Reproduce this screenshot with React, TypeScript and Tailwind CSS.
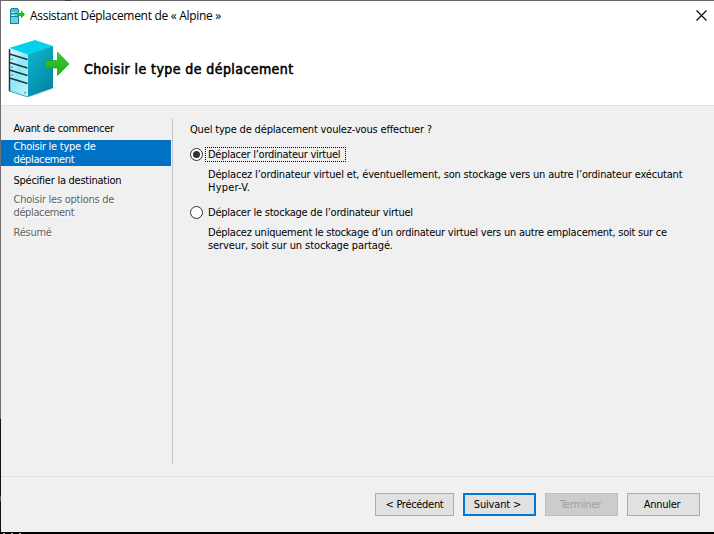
import React from "react";

const ui = "font-['DejaVu_Sans_Condensed','DejaVu_Sans',sans-serif] text-[11px] leading-[13px] whitespace-nowrap";

function ServerArrow() {
  return (
    <svg width="66" height="62" viewBox="0 0 66 62" className="block">
      <defs>
        <linearGradient id="front" x1="0" y1="0" x2="1" y2="1">
          <stop offset="0" stopColor="#eafcff" />
          <stop offset="0.5" stopColor="#8fe6f5" />
          <stop offset="1" stopColor="#c9f6fc" />
        </linearGradient>
        <linearGradient id="side" x1="0" y1="0" x2="0.6" y2="1">
          <stop offset="0" stopColor="#10b9d2" />
          <stop offset="1" stopColor="#0487a4" />
        </linearGradient>
        <linearGradient id="arrow" x1="0" y1="0" x2="0" y2="1">
          <stop offset="0" stopColor="#3cc935" />
          <stop offset="1" stopColor="#1fae1b" />
        </linearGradient>
      </defs>
      <path d="M20 59 L45 49 L50 49 L30 57Z" fill="#e8e8e8" />
      <path d="M1 10 L27 2 L45 8 L20 17Z" fill="#04d2ec" />
      <path d="M20 16.500 L45 8 V50 L20 59Z" fill="url(#side)" />
      <path d="M1 10 L20 16.500 V59 L1 53Z" fill="url(#front)" />
      <path d="M1.500 11 V53 M1.500 16 L19.500 21.500 M1.500 24.500 L19.500 30 M1.500 32 L19.500 37.500 M1.500 40 L19.500 45.500" fill="none" stroke="#123c48" strokeWidth="1.500" />
      <path d="M1 53 L20 59" stroke="#3ba7ba" strokeWidth="1" />
      <path d="M3.500 20.500h1.200v1.200h-1.200z M3.500 28.500h1.200v1.200h-1.200z M3.500 36.500h1.200v1.200h-1.200z M16.500 54h1.200v1.200h-1.200z" fill="#075b70" />
      <path d="M37.500 22.500 H49.500 V14 L61 26 L49.500 37.500 V30 H37.500Z" fill="url(#arrow)" stroke="#1ca41a" strokeWidth="0.700" />
    </svg>
  );
}

function ServerArrowSmall() {
  return (
    <svg width="16" height="16" viewBox="0 0 16 16" className="block" shapeRendering="crispEdges">
      <path d="M2 0h7v1h1v15H1V1h1z" fill="#168a98" />
      <path d="M2 1h7v3H2z" fill="#43bfce" />
      <path d="M2 4h7v11H2z" fill="#63d5e0" />
      <path d="M2 5h7v1H2z M2 8h7v1H2z" fill="#197f8d" />
      <path d="M3 4h2v1H3z M3 7h2v1H3z" fill="#fff" />
      <path d="M8 5h4V3h1v1h1v1h1v1h1v1h-1v1h-1v1h-1v1h-1V8H8z" fill="#22bb28" />
    </svg>
  );
}

function Radio({ checked = false }: { checked?: boolean }) {
  return (
    <span className="flex size-[13px] shrink-0 items-center justify-center rounded-full border border-[#333] bg-white">
      {checked && <span className="size-[7px] rounded-full bg-[#333]" />}
    </span>
  );
}

export default function App() {
  return (
    <div className={`flex h-[534px] w-[714px] flex-col overflow-hidden bg-black text-black ${ui}`}>
      <div className="flex h-px shrink-0 bg-[#6a6869] pl-[65px]">
        <div className="w-[6px] bg-[#3c3c3c]" />
      </div>
      <div className="flex h-[531px] shrink-0">
        <div className="flex w-px flex-col">
          <div className="h-[418px] bg-[#706e6f]" />
          <div className="h-[77px] bg-[#111]" />
          <div className="h-[5px] bg-[#555]" />
          <div className="grow bg-[#111]" />
        </div>
        <div className="flex w-[713px] flex-col bg-[#f0f0f0]">
          <header className="flex h-[105px] shrink-0 flex-col border-b border-[#dfdfdf] bg-white">
            <div className="flex h-[30px] items-center pl-2">
              <ServerArrowSmall />
              <h1 className="mb-px ml-[5px] font-['Open_Sans',sans-serif] text-[12px] leading-4 tracking-[-0.3px]">Assistant Déplacement de « Alpine »</h1>
              <svg width="11" height="11" viewBox="0 0 11 11" className="mr-[7px] mb-px ml-auto">
                <path d="M0.500 0.500 L10.500 10.500 M10.500 0.500 L0.500 10.500" stroke="#000" strokeWidth="1.100" />
              </svg>
            </div>
            <div className="flex pt-[7px] pl-[7px]">
              <ServerArrow />
              <h2 className="mt-[22px] ml-[10px] text-[14px] leading-[18px] tracking-[0.42px] [-webkit-text-stroke:0.55px_black]">Choisir le type de déplacement</h2>
            </div>
          </header>
          <main className="flex h-[370px] shrink-0">
            <nav className="mt-[12px] flex h-[346px] w-[172px] flex-col border-r border-[#c8c8c8] tracking-[-0.25px]">
              <div className="pt-[4px] pl-[12.5px] tracking-[-0.3px]">Avant de commencer</div>
              <div className="mt-[5px] mr-px h-[26px] bg-[#0072c6] pl-[12.5px] text-white">Choisir le type de<br /><span className="tracking-[-0.38px]">déplacement</span></div>
              <div className="mt-[8px] pl-[12.5px]">Spécifier la destination</div>
              <div className="mt-[6px] pl-[12.5px] text-[#606060] [text-shadow:1px_1px_0_#fff]">Choisir les options de<br /><span className="tracking-[-0.38px]">déplacement</span></div>
              <div className="mt-[7px] pl-[12.5px] text-[#606060] [text-shadow:1px_1px_0_#fff]">Résumé</div>
            </nav>
            <section className="flex flex-col pt-[17px] pl-[17px]">
              <p className="tracking-[-0.17px]">Quel type de déplacement voulez-vous effectuer ?</p>
              <label className="mt-[11px] flex h-[15px] items-center">
                <Radio checked />
                <span className="ml-[2px] h-[15px] w-[141px] border border-dotted border-black pl-[2px] tracking-[-0.26px]">Déplacer l’ordinateur virtuel</span>
              </label>
              <p className="mt-[6px] pl-[18px] tracking-[-0.18px]">Déplacez l’ordinateur virtuel et, éventuellement, son stockage vers un autre l’ordinateur exécutant<br /><span className="tracking-[0.2px]">Hyper-V.</span></p>
              <label className="mt-[11px] flex h-[15px] items-center">
                <Radio />
                <span className="ml-[5px] tracking-[-0.23px]">Déplacer le stockage de l’ordinateur virtuel</span>
              </label>
              <p className="mt-[6px] pl-[18px] tracking-[-0.235px]">Déplacez uniquement le stockage d’un ordinateur virtuel vers un autre emplacement, soit sur ce<br /><span className="tracking-[-0.1px]">serveur, soit sur un stockage partagé.</span></p>
            </section>
          </main>
          <footer className="flex grow items-start justify-end gap-[9px] border-t border-[#dfdfdf] pt-4 pr-[14px] tracking-[-0.3px]">
            <button className="h-[23px] w-[79px] border border-[#adadad] bg-[#e1e1e1]">&lt; Précédent</button>
            <button className="h-[23px] w-[73px] border-2 border-[#0078d7] bg-[#e1e1e1] pr-1 tracking-[-0.15px]">Suivant &gt;</button>
            <button className="h-[23px] w-[73px] border border-[#bfbfbf] bg-[#cccccc] pr-[2px] text-[#a0a0a0]">Terminer</button>
            <button className="h-[23px] w-[73px] border border-[#adadad] bg-[#e1e1e1] pr-[3px]">Annuler</button>
          </footer>
        </div>
      </div>
      <div className="flex h-[2px] shrink-0 items-end gap-[6px] pl-[3px]">
        <span className="h-px w-[2px] bg-[#bbb]" />
        <span className="h-px w-[2px] bg-[#bbb]" />
        <span className="h-px w-[2px] bg-[#bbb]" />
      </div>
    </div>
  );
}
